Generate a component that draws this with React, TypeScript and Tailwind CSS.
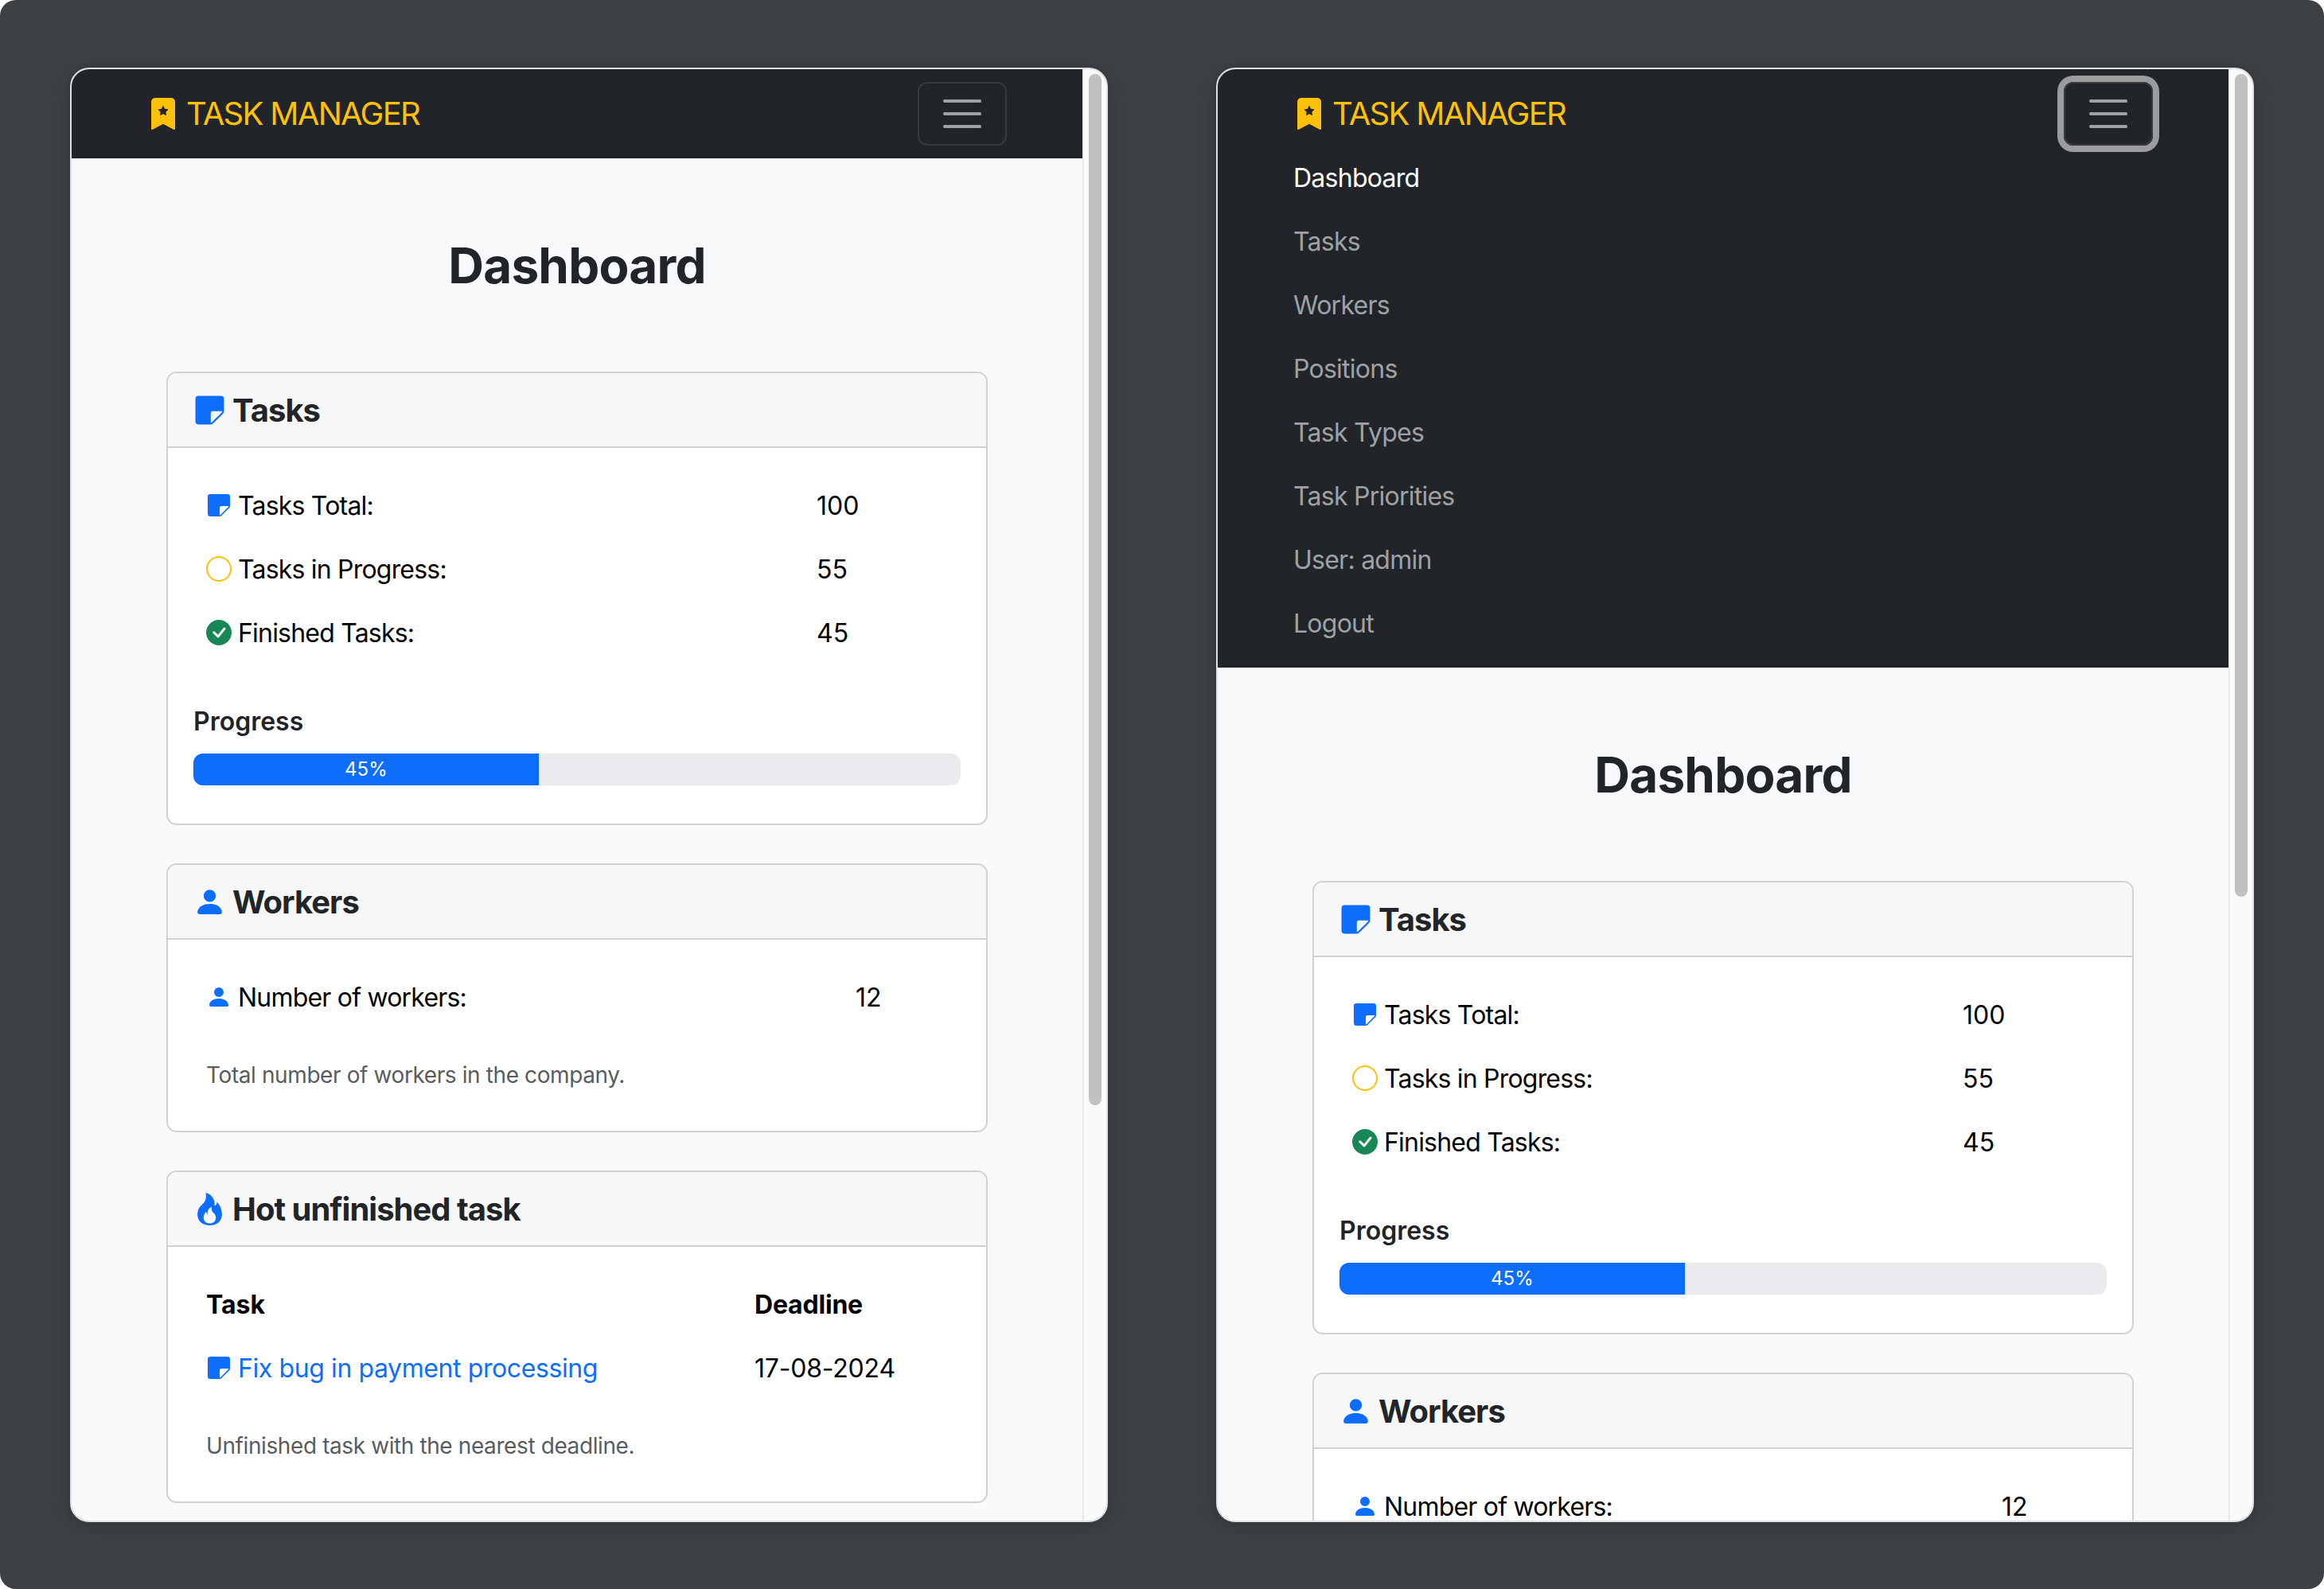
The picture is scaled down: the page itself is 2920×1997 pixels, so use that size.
import { BsBookmarkStarFill, BsCheckCircleFill, BsCircle, BsFire, BsPersonFill, BsStickyFill } from "react-icons/bs";
import type { ReactNode } from "react";

const navLinks = ["Tasks", "Workers", "Positions", "Task Types", "Task Priorities", "User: admin", "Logout"];

function Navbar({ open }: { open: boolean }) {
  return (
    <nav className="bg-[#212529] px-[95px] pt-4 pb-4">
      <div className="flex h-20 items-center justify-between">
        <a className="flex items-center text-[40px] leading-[60px] tracking-[-1.7px] text-[#ffc107]">
          <BsBookmarkStarFill className="mr-[9px] h-10 w-10" />
          TASK MANAGER
        </a>
        <button
          className={
            open
              ? "flex h-20 w-28 flex-col items-center justify-center gap-3 rounded-xl border-2 border-[#37393d] ring-8 ring-[#9b9c9e]"
              : "flex h-20 w-28 flex-col items-center justify-center gap-3 rounded-xl border-2 border-[#37393d]"
          }
        >
          <span className="h-1 w-12 rounded-full bg-[#a0a1a3]" />
          <span className="h-1 w-12 rounded-full bg-[#a0a1a3]" />
          <span className="h-1 w-12 rounded-full bg-[#a0a1a3]" />
        </button>
      </div>
      {open && (
        <ul className="flex flex-col text-[32px] tracking-[-0.75px]">
          <li className="flex h-20 items-center pt-0.5 text-white">Dashboard</li>
          {navLinks.map((link) => (
            <li key={link} className="flex h-20 items-center pt-0.5 text-[#9fa1a3]">
              {link}
            </li>
          ))}
        </ul>
      )}
    </nav>
  );
}

function Card({ icon, title, children }: { icon: ReactNode; title: string; children: ReactNode }) {
  return (
    <section className="mb-12 rounded-[13px] border-2 border-[#d0d1d2] bg-white">
      <header className="flex h-[94px] items-center gap-2 rounded-t-[11px] border-b-2 border-[#d0d1d2] bg-[#f7f7f7] px-8">
        <span className="text-[#0d6efd]">{icon}</span>
        <h4 className="text-[40px] leading-[53px] font-bold tracking-[-1px] text-[#212529]">{title}</h4>
      </header>
      <div className="px-8 pt-8 pb-12">{children}</div>
    </section>
  );
}

function Row({ labelClass, icon, label, value }: { labelClass: string; icon: ReactNode; label: string; value: string }) {
  return (
    <div className="flex h-20 items-center text-[32px] text-black">
      <div className={labelClass + " flex items-center gap-2 pl-4 tracking-[-0.8px]"}>
        {icon}
        <span className="pt-0.5">{label}</span>
      </div>
      <div className="pt-0.5 pl-4">{value}</div>
    </div>
  );
}

function Muted({ children }: { children: ReactNode }) {
  return <p className="mt-[37px] mb-px pl-4 text-[28px] leading-[42px] tracking-[-0.4px] text-[#595c5f]">{children}</p>;
}

function Page() {
  return (
    <main className="bg-[#f8f9fa] px-[119px] pt-24">
      <h1 className="mb-[94px] text-center text-[62px] leading-[78px] font-bold tracking-[-0.8px] text-[#212529]">Dashboard</h1>

      <Card icon={<BsStickyFill className="h-[41px] w-[41px]" />} title="Tasks">
        <Row
          labelClass="w-[767px]"
          icon={<BsStickyFill className="h-8 w-8 text-[#0d6efd]" />}
          label="Tasks Total:"
          value="100"
        />
        <Row
          labelClass="w-[767px]"
          icon={<BsCircle className="h-8 w-8 text-[#ffc107]" />}
          label="Tasks in Progress:"
          value="55"
        />
        <Row
          labelClass="w-[767px]"
          icon={<BsCheckCircleFill className="h-8 w-8 text-[#198754]" />}
          label="Finished Tasks:"
          value="45"
        />
        <h5 className="mt-12 mb-4 text-[32px] leading-[48px] font-semibold text-[#212529]">Progress</h5>
        <div className="flex h-10 overflow-hidden rounded-xl bg-[#eaebef]">
          <div className="flex w-[45%] items-center justify-center bg-[#0d6efd] text-2xl text-white">45%</div>
        </div>
      </Card>

      <Card icon={<BsPersonFill className="h-[41px] w-[41px]" />} title="Workers">
        <Row
          labelClass="w-[816px]"
          icon={<BsPersonFill className="h-8 w-8 text-[#0d6efd]" />}
          label="Number of workers:"
          value="12"
        />
        <Muted>Total number of workers in the company.</Muted>
      </Card>

      <Card icon={<BsFire className="h-[41px] w-[41px]" />} title="Hot unfinished task">
        <div className="flex h-20 items-center pt-0.5 text-[32px] font-bold text-black">
          <div className="w-[689px] pl-4">Task</div>
          <div className="pl-4 tracking-[-0.2px]">Deadline</div>
        </div>
        <div className="flex h-20 items-center text-[32px] text-black">
          <a className="flex w-[689px] items-center gap-2 pl-4 tracking-[-0.4px] text-[#0d6efd]">
            <BsStickyFill className="h-8 w-8" />
            <span className="pt-0.5">Fix bug in payment processing</span>
          </a>
          <div className="pt-0.5 pl-4 tracking-[-0.2px]">17-08-2024</div>
        </div>
        <Muted>Unfinished task with the nearest deadline.</Muted>
      </Card>
    </main>
  );
}

function Window({ open }: { open: boolean }) {
  return (
    <div className="flex h-[1828px] w-[1304px] overflow-hidden rounded-3xl border-2 border-[#e0e0e0] bg-[#fafafa] shadow-[0_4px_24px_rgba(0,0,0,0.2)]">
      <div className="h-full w-[1270px] overflow-hidden">
        <Navbar open={open} />
        <Page />
      </div>
      <div className="h-full w-[30px] border-l-2 border-[#e8e8e8] pt-[6px] pl-[6px]">
        <div className={open ? "h-[1034px] w-4 rounded-full bg-[#c1c1c1]" : "h-[1296px] w-4 rounded-full bg-[#c1c1c1]"} />
      </div>
    </div>
  );
}

export default function App() {
  return (
    <div className="flex h-[1997px] w-[2920px] gap-[136px] overflow-hidden rounded-[20px] bg-[#3d4144] pt-[85px] pl-[88px] font-['Inter',sans-serif]">
      <Window open={false} />
      <Window open={true} />
    </div>
  );
}
